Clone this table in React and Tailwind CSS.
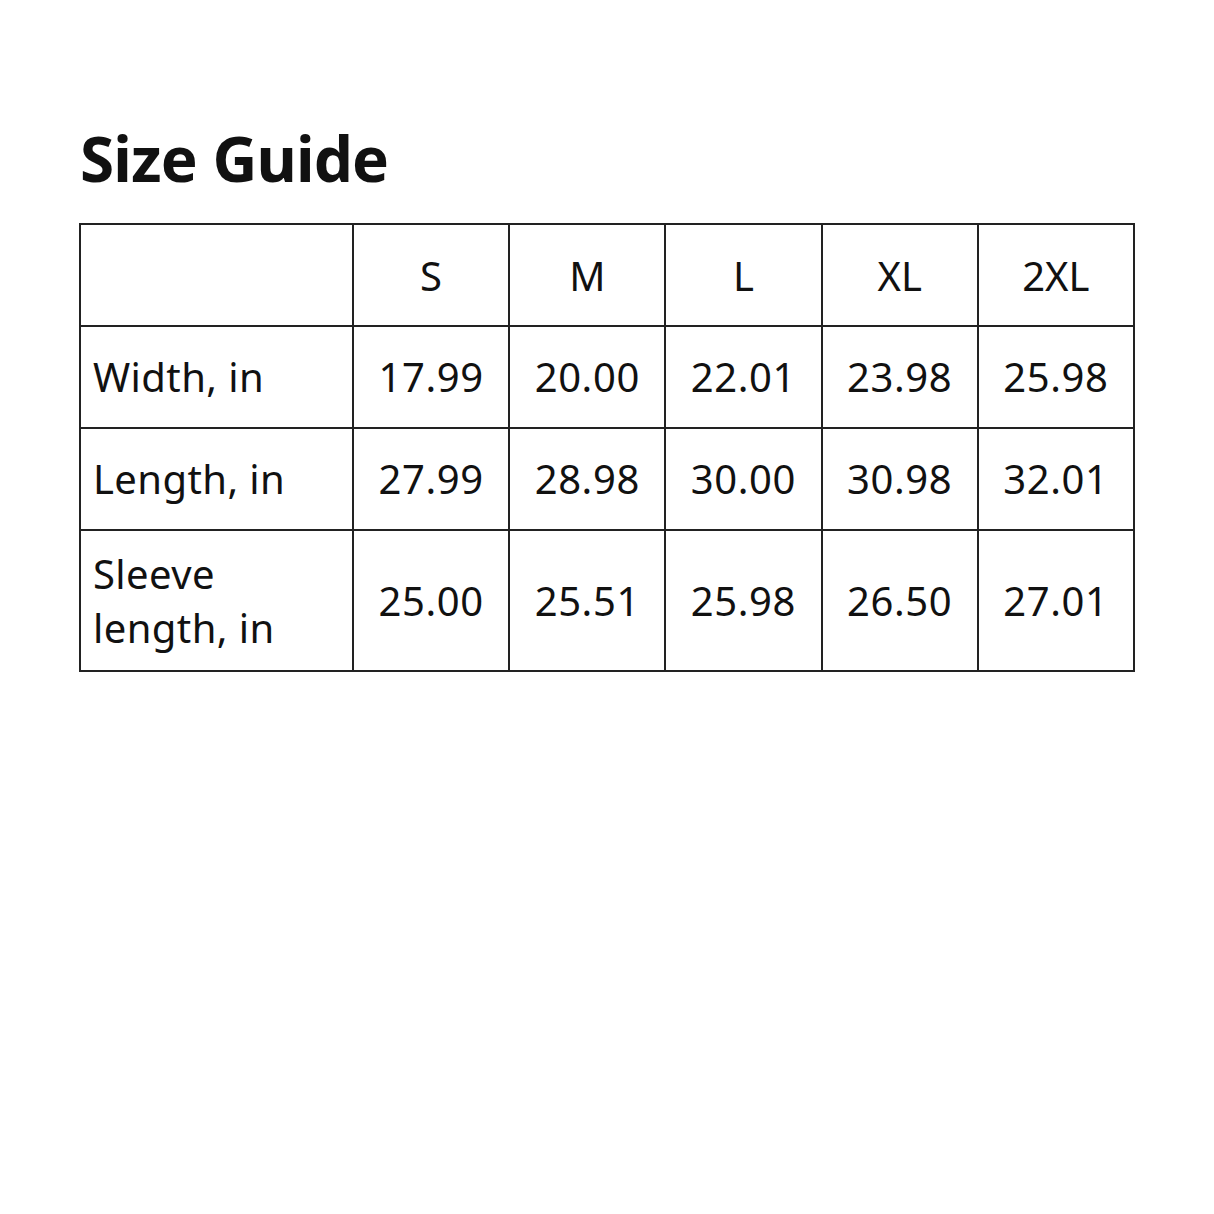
import React from 'react';

const sizes = ['S', 'M', 'L', 'XL', '2XL'];
const rows = [
  { label: 'Width, in', values: ['17.99', '20.00', '22.01', '23.98', '25.98'], h: 'h-[102px]' },
  { label: 'Length, in', values: ['27.99', '28.98', '30.00', '30.98', '32.01'], h: 'h-[102px]' },
  { label: 'Sleeve length, in', values: ['25.00', '25.51', '25.98', '26.50', '27.01'], h: 'h-[141px]' },
];

export default function App() {
  return (
    <div className="w-[1214px] h-[1214px] bg-white text-[#111] px-[79px] pt-[120px]" style={{ fontFamily: '"Noto Sans", sans-serif' }}>
      <h1 className="ml-[1px] text-[62px] font-bold leading-[76px] tracking-[-0.8px]">Size Guide</h1>
      <table className="mt-[27px] w-[1056px] table-fixed border-collapse">
        <colgroup>
          <col className="w-[273px]" />
          {sizes.map(s => <col key={s} />)}
        </colgroup>
        <thead>
          <tr className="h-[102px]">
            <th className="border-2 border-[#222]"></th>
            {sizes.map(s => (
              <th key={s} className="border-2 border-[#222] text-[40px] font-normal text-center pt-[1px]">{s}</th>
            ))}
          </tr>
        </thead>
        <tbody>
          {rows.map(r => (
            <tr key={r.label} className={r.h}>
              <td className="border-2 border-[#222] text-[40px] leading-[54px] pl-[12px] pr-[30px] text-left tracking-[0.4px]">{r.label}</td>
              {r.values.map((v, i) => (
                <td key={i} className="border-2 border-[#222] text-[40px] text-center tracking-[0.6px]">{v}</td>
              ))}
            </tr>
          ))}
        </tbody>
      </table>
    </div>
  );
}
